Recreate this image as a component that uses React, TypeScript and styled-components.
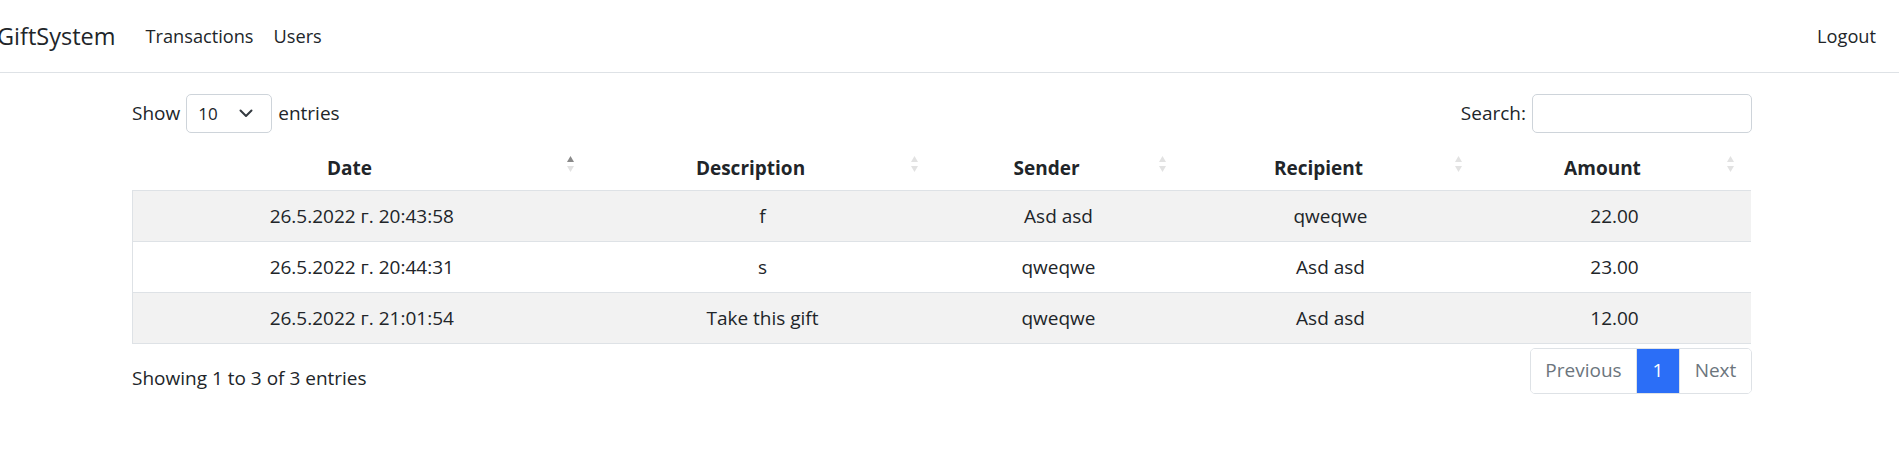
import React from "react";
import styled, { createGlobalStyle } from "styled-components";

const GlobalStyle = createGlobalStyle`
  html, body {
    margin: 0;
    padding: 0;
    background: #fff;
  }
  body {
    font-family: "Segoe UI", "Open Sans", "Noto Sans", sans-serif;
    font-size: 19px;
    line-height: 1.5;
    color: #212529;
  }
  * { box-sizing: border-box; }
`;

const NavBar = styled.nav`
  height: 73px;
  display: flex;
  align-items: center;
  border-bottom: 1px solid #dee2e6;
  padding: 2px 13px 0 0;
  overflow: hidden;
`;

const Brand = styled.a`
  font-size: 23.5px;
  color: #212529;
  margin-left: -3px;
  margin-right: 20px;
  text-decoration: none;
`;

const NavList = styled.div`
  display: flex;
  flex: 1;
`;

const NavLink = styled.a<{ $end?: boolean }>`
  padding: 0 10px;
  font-size: 18.2px;
  color: #212529;
  text-decoration: none;
  margin-left: ${(p) => (p.$end ? "auto" : "0")};
`;

const Main = styled.main`
  padding-left: 132px;
`;

const Wrapper = styled.div`
  width: 1620px;
`;

const Controls = styled.div`
  margin-top: 21px;
  display: flex;
  justify-content: space-between;
  align-items: center;
  height: 39px;
`;

const Label = styled.label`
  display: flex;
  align-items: center;
  gap: 6px;
`;

const SelectBox = styled.div`
  width: 86px;
  height: 39px;
  border: 1px solid #ced4da;
  border-radius: 5px;
  display: flex;
  align-items: center;
  justify-content: space-between;
  padding: 0 18px 0 11px;
  font-size: 17px;
`;

const SearchInput = styled.input`
  width: 220px;
  height: 39px;
  border: 1px solid #ced4da;
  border-radius: 5px;
  font: inherit;
  padding: 0 12px;
  outline: none;
`;

const Table = styled.table`
  margin-top: 6px;
  width: 1618px;
  border-collapse: collapse;
  table-layout: fixed;
`;

const HeadCell = styled.th`
  position: relative;
  height: 51px;
  padding: 7px 34px 0 10px;
  font-weight: 700;
  text-align: center;
  border-bottom: 1px solid #dee2e6;
`;

const SortIcon = styled.span`
  position: absolute;
  right: 17px;
  top: 50%;
  transform: translateY(-50%);
  display: flex;
  flex-direction: column;
  gap: 4px;
  line-height: 0;
`;

const Row = styled.tr<{ $striped: boolean }>`
  background: ${(p) => (p.$striped ? "#f2f2f2" : "#fff")};
`;

const Cell = styled.td`
  height: 51px;
  padding: 2px 10px 0;
  text-align: center;
  border-bottom: 1px solid #dee2e6;
  &:first-child {
    border-left: 1px solid #dee2e6;
  }
`;

const Footer = styled.div`
  display: flex;
  justify-content: space-between;
  align-items: flex-start;
  padding-top: 4px;
`;

const Info = styled.div`
  padding-top: 16px;
`;

const Pager = styled.ul`
  display: flex;
  margin: 0;
  padding: 0;
  list-style: none;
  border: 1px solid #dee2e6;
  border-radius: 5px;
  height: 46px;
  overflow: hidden;
`;

const PageItem = styled.li<{ $active?: boolean; $w: number }>`
  width: ${(p) => p.$w}px;
  display: flex;
  align-items: center;
  justify-content: center;
  color: ${(p) => (p.$active ? "#fff" : "#6c757d")};
  background: ${(p) => (p.$active ? "#2b6ef7" : "#fff")};
  & + & {
    border-left: 1px solid ${(p) => (p.$active ? "#2b6ef7" : "#dee2e6")};
  }
`;

const Arrows: React.FC<{ active?: boolean }> = ({ active }) => (
  <SortIcon>
    <svg width="7" height="6" viewBox="0 0 7 6">
      <polygon points="3.5,0 7,6 0,6" fill={active ? "#8a8a8a" : "#e2e2e2"} />
    </svg>
    <svg width="7" height="6" viewBox="0 0 7 6">
      <polygon points="0,0 7,0 3.5,6" fill="#e2e2e2" />
    </svg>
  </SortIcon>
);

const columns = [
  { title: "Date", width: 458 },
  { title: "Description", width: 344 },
  { title: "Sender", width: 248 },
  { title: "Recipient", width: 296 },
  { title: "Amount", width: 272 },
];

const rows = [
  ["26.5.2022 г. 20:43:58", "f", "Asd asd", "qweqwe", "22.00"],
  ["26.5.2022 г. 20:44:31", "s", "qweqwe", "Asd asd", "23.00"],
  ["26.5.2022 г. 21:01:54", "Take this gift", "qweqwe", "Asd asd", "12.00"],
];

const App: React.FC = () => {
  return (
    <>
      <GlobalStyle />
      <NavBar>
        <Brand href="#">GiftSystem</Brand>
        <NavList>
          <NavLink href="#">Transactions</NavLink>
          <NavLink href="#">Users</NavLink>
          <NavLink href="#" $end>
            Logout
          </NavLink>
        </NavList>
      </NavBar>
      <Main>
        <Wrapper>
          <Controls>
            <Label>
              Show
              <SelectBox>
                <span>10</span>
                <svg width="14" height="9" viewBox="0 0 14 9">
                  <path d="M1.5 1.5 L7 7 L12.5 1.5" fill="none" stroke="#343a40" strokeWidth="2" strokeLinecap="round" strokeLinejoin="round" />
                </svg>
              </SelectBox>
              entries
            </Label>
            <Label>
              Search:
              <SearchInput type="search" />
            </Label>
          </Controls>
          <Table>
            <colgroup>
              {columns.map((c) => (
                <col key={c.title} style={{ width: c.width }} />
              ))}
            </colgroup>
            <thead>
              <tr>
                {columns.map((c, i) => (
                  <HeadCell key={c.title}>
                    {c.title}
                    <Arrows active={i === 0} />
                  </HeadCell>
                ))}
              </tr>
            </thead>
            <tbody>
              {rows.map((r, i) => (
                <Row key={i} $striped={i % 2 === 0}>
                  {r.map((v, j) => (
                    <Cell key={j}>{v}</Cell>
                  ))}
                </Row>
              ))}
            </tbody>
          </Table>
          <Footer>
            <Info>Showing 1 to 3 of 3 entries</Info>
            <Pager>
              <PageItem $w={105}>Previous</PageItem>
              <PageItem $w={43} $active>
                1
              </PageItem>
              <PageItem $w={72}>Next</PageItem>
            </Pager>
          </Footer>
        </Wrapper>
      </Main>
    </>
  );
};

export default App;
